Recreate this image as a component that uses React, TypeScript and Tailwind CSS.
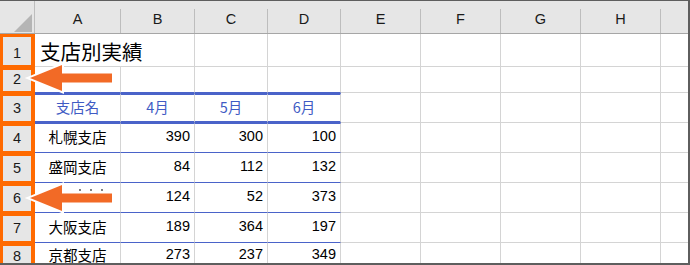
import React from "react";

const FONT = '"Liberation Sans", "Noto Sans CJK JP", sans-serif';
const JP = '"Noto Sans CJK JP", "Liberation Sans", sans-serif';

const cols = ["A", "B", "C", "D", "E", "F", "G", "H", ""];

type Row = { name: string; v: [number, number, number] };
const data: Row[] = [
  { name: "札幌支店", v: [390, 300, 100] },
  { name: "盛岡支店", v: [84, 112, 132] },
  { name: "", v: [124, 52, 373] },
  { name: "大阪支店", v: [189, 364, 197] },
  { name: "京都支店", v: [273, 237, 349] },
];

function RowHead({ n, inner = "" }: { n: number; inner?: string }) {
  return (
    <div className="bg-[#ff6a00] pl-[3px] pr-[4px] pt-[3px] pb-[2px]">
      <div
        className={`h-full bg-[#e6e6e6] flex items-center justify-center text-[14.5px] text-[#1a1a1a] ${inner}`}
      >
        {n}
      </div>
    </div>
  );
}

function Empty({ extra = "" }: { extra?: string }) {
  return <div className={`border-r border-b border-[#d4d4d4] bg-white ${extra}`} />;
}

export default function App() {
  return (
    <div
      className="relative w-[690px] h-[265px] overflow-hidden bg-white border-t border-r-2 border-b-2 border-[#5e5e5e]"
      style={{ fontFamily: FONT }}
    >
      <div className="grid grid-cols-[35px_86px_74px_73px_73px_80px_80px_80px_80px_1fr] grid-rows-[33px_33px_26px_30px_30px_30px_30px_30px]">
        {/* header row */}
        <div className="bg-[#e6e6e6] border-b border-[#a6a6a6] flex items-end">
          <svg width="34" height="32" viewBox="0 0 34 32" className="block">
            <polygon points="32,13 32,31 14,31" fill="#b5b5b5" />
          </svg>
          <div className="w-px h-[32px] bg-[#bdbdbd]" />
        </div>
        {cols.map((c, i) => (
          <div key={i} className="bg-[#e6e6e6] border-b border-[#a6a6a6] flex items-end">
            <div className="flex-1 h-full flex items-center justify-center pt-[5px] text-[14.5px] text-[#1a1a1a]">
              {c}
            </div>
            {i < 8 && <div className="w-px h-[24px] bg-[#bdbdbd]" />}
          </div>
        ))}

        {/* row 1 */}
        <RowHead n={1} inner="pt-[5px]" />
        <div className="border-b border-[#d4d4d4] bg-white flex items-end pl-[5px] pb-[2px]">
          <span
            className="relative z-10 whitespace-nowrap text-[20.5px] leading-[26px] text-black"
            style={{ fontFamily: JP }}
          >
            支店別実績
          </span>
        </div>
        <Empty />
        <Empty />
        <Empty />
        <Empty />
        <Empty />
        <Empty />
        <Empty />
        <Empty extra="border-r-0" />

        {/* row 2 */}
        <RowHead n={2} inner="pb-[2px]" />
        <div className="border-r border-b border-[#d4d4d4] border-b-[#4a63c9] bg-white" />
        <div className="border-r border-b border-[#d4d4d4] border-b-[#4a63c9] bg-white" />
        <div className="border-r border-b border-[#d4d4d4] border-b-[#4a63c9] bg-white" />
        <div className="border-r border-b border-[#d4d4d4] border-b-[#4a63c9] bg-white" />
        <Empty />
        <Empty />
        <Empty />
        <Empty />
        <Empty extra="border-r-0" />

        {/* row 3 */}
        <RowHead n={3} />
        {["支店名", "4月", "5月", "6月"].map((t, i) => (
          <div
            key={i}
            className="border-r border-[#d4d4d4] border-t-2 border-b-2 border-t-[#4a63c9] border-b-[#4a63c9] bg-white flex items-center justify-center pb-[2px] text-[14.5px] text-[#3f5bc4]"
            style={{ fontFamily: JP }}
          >
            {t}
          </div>
        ))}
        <Empty />
        <Empty />
        <Empty />
        <Empty />
        <Empty extra="border-r-0" />

        {/* data rows */}
        {data.map((r, ri) => (
          <React.Fragment key={ri}>
            <RowHead n={4 + ri} />
            <div
              className={`border-r border-b border-[#d4d4d4] border-b-[#4a63c9] bg-white flex items-center justify-center pb-[2px] text-[14.5px] text-black ${
                ri === 0 ? "border-t border-t-[#4a63c9]" : ""
              }`}
              style={{ fontFamily: JP }}
            >
              {r.name}
            </div>
            {r.v.map((v, vi) => (
              <div
                key={vi}
                className={`border-r border-b border-[#d4d4d4] border-b-[#4a63c9] bg-white flex items-center justify-end pr-[4px] pb-[2px] text-[14.5px] text-black ${
                  ri === 0 ? "border-t border-t-[#4a63c9]" : ""
                }`}
              >
                {v}
              </div>
            ))}
            <Empty />
            <Empty />
            <Empty />
            <Empty />
            <Empty extra="border-r-0" />
          </React.Fragment>
        ))}
      </div>

      {/* arrows overlay */}
      <svg
        className="absolute left-0 top-[-1px] pointer-events-none"
        width="690"
        height="265"
        viewBox="0 0 690 265"
      >
        {[0, 120].map((dy) => (
          <polygon
            key={dy}
            transform={`translate(0 ${dy})`}
            points="30,78 62,65 62,73.5 112,73.5 112,82.5 62,82.5 62,91"
            fill="#f26a26"
            stroke="#ffffff"
            strokeWidth="4"
            strokeLinejoin="miter"
            style={{ paintOrder: "stroke" }}
          />
        ))}
        <circle cx="80" cy="190" r="0.9" fill="#444" />
        <circle cx="91" cy="190" r="0.9" fill="#444" />
        <circle cx="102" cy="190" r="0.9" fill="#444" />
      </svg>
    </div>
  );
}
